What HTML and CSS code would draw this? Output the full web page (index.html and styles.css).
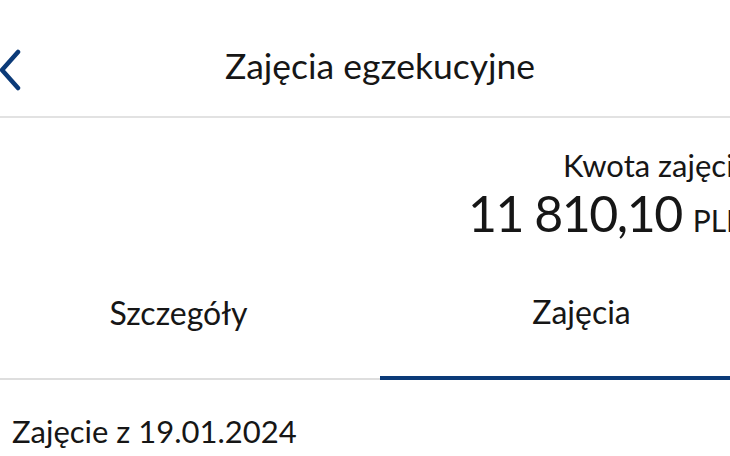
FILE: index.html
```html
<!DOCTYPE html>
<html lang="pl">
<head>
<meta charset="utf-8">
<link rel="stylesheet" href="styles.css">
</head>
<body>
<div class="page">
  <header class="topbar">
    <button class="back" aria-label="Wstecz">
      <svg width="24" height="44" viewBox="0 0 24 44"><path d="M19 4 L3 22 L19 40" fill="none" stroke="#0b3a78" stroke-width="4.5" stroke-linecap="round" stroke-linejoin="round"/></svg>
    </button>
    <h1 class="title">Zajęcia egzekucyjne</h1>
  </header>
  <section class="summary">
    <div class="label">Kwota zajęcia</div>
    <div class="amount"><span class="num">11 810,10</span><span class="cur">PLN</span></div>
  </section>
  <nav class="tabs">
    <div class="tab">Szczegóły</div>
    <div class="tab active">Zajęcia</div>
  </nav>
  <div class="item">Zajęcie z 19.01.2024</div>
</div>
</body>
</html>
```
FILE: styles.css
```css
html, body { margin: 0; padding: 0; background: #fff; overflow: hidden; }
body { width: 730px; height: 456px; font-family: Lato, "Open Sans", sans-serif; color: #161616; }
.page { width: 806px; margin-left: -23px; }
.topbar { position: relative; height: 116px; border-bottom: 2px solid #e2e2e2; display: flex; align-items: flex-start; justify-content: center; }
.back { position: absolute; left: 22px; top: 48px; background: none; border: 0; padding: 0; }
.back svg { display: block; }
.title { margin: 0; font-weight: 400; font-size: 35.5px; line-height: 42px; padding-top: 45px; }
.summary { display: flex; flex-direction: column; align-items: flex-end; padding-top: 27px; padding-right: 34px; height: 140px; box-sizing: border-box; }
.label { font-size: 31px; line-height: 40px; }
.amount { display: flex; align-items: baseline; gap: 11px; line-height: 57px; }
.num { font-size: 50px; letter-spacing: -1.5px; }
.cur { font-size: 30px; }
.tabs { display: grid; grid-template-columns: 1fr 1fr; height: 122px; }
.tab { display: flex; align-items: center; justify-content: center; font-size: 32px; padding-bottom: 12px; border-bottom: 2px solid #dedede; }
.tab.active { border-bottom: 4px solid #0b3a78; }
.item { padding: 32px 0 0 35px; font-size: 31px; }
```
